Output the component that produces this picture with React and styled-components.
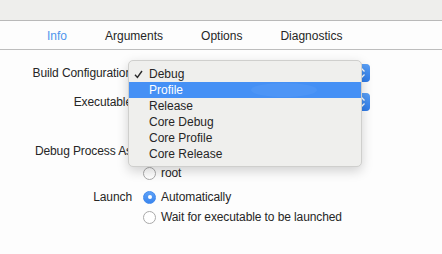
import styled, { createGlobalStyle } from "styled-components";

const GlobalStyle = createGlobalStyle`
  html, body {
    margin: 0;
    padding: 0;
    background: #fdfdfd;
    font-family: "Liberation Sans", Arial, sans-serif;
    font-size: 12px;
    color: #262626;
  }
`;

const Window = styled.div`
  position: relative;
  width: 442px;
  height: 254px;
  overflow: hidden;
  background: #fdfdfd;
`;

const TopBar = styled.div`
  height: 20px;
  background: #eeeeec;
  border-bottom: 1px solid #b9b9b9;
`;

const TabBar = styled.div`
  height: 28px;
  display: flex;
  align-items: center;
  gap: 38px;
  padding-left: 47px;
  border-bottom: 1px solid #bdbdbd;
  background: #fdfdfd;
`;

const Tab = styled.div`
  font-size: 12px;
  color: ${(p) => (p.$active ? "#4f95ec" : "#262626")};
  padding-top: 1px;
`;

const Form = styled.div`
  display: flex;
  flex-direction: column;
  padding-top: 14px;
`;

const Row = styled.div`
  display: grid;
  grid-template-columns: 132px 1fr;
  column-gap: 11px;
  align-items: start;
  margin-top: ${(p) => p.$top || 0}px;
`;

const Label = styled.div`
  text-align: right;
  line-height: 18px;
  white-space: nowrap;
  letter-spacing: -0.1px;
`;

const Popup = styled.div`
  position: relative;
  width: 227px;
  height: 18px;
  box-sizing: border-box;
  border: 1px solid #c4c4c4;
  border-radius: 4px;
  background: #ffffff;
`;

const PopupCap = styled.div`
  position: absolute;
  right: -1px;
  top: -1px;
  width: 16px;
  height: 18px;
  border-radius: 0 4px 4px 0;
  background: linear-gradient(#5aa0f7, #2f7be8);
  display: flex;
  align-items: center;
  justify-content: center;
`;

const Radios = styled.div`
  display: flex;
  flex-direction: column;
`;

const RadioItem = styled.div`
  display: flex;
  align-items: center;
  gap: 5px;
  height: ${(p) => p.$h || 20}px;
  letter-spacing: -0.1px;
`;

const RadioDot = styled.span`
  width: 13px;
  height: 13px;
  box-sizing: border-box;
  border-radius: 50%;
  border: 1px solid ${(p) => (p.$on ? "#3f89ee" : "#a9a9a9")};
  background: ${(p) => (p.$on ? "linear-gradient(#5ea2f8, #3a85ee)" : "#ffffff")};
  display: flex;
  align-items: center;
  justify-content: center;
  &::after {
    content: "";
    display: ${(p) => (p.$on ? "block" : "none")};
    width: 4px;
    height: 4px;
    border-radius: 50%;
    background: #ffffff;
  }
`;

const Menu = styled.div`
  position: absolute;
  left: 128px;
  top: 60px;
  width: 234px;
  box-sizing: border-box;
  padding: 5px 0 4px;
  background: #efefed;
  border: 1px solid #cfcfcd;
  border-radius: 5px;
  box-shadow: 0 4px 12px rgba(0, 0, 0, 0.18);
`;

const MenuItem = styled.div`
  position: relative;
  height: 16px;
  line-height: 16px;
  padding-left: 20px;
  font-size: 12px;
  color: ${(p) => (p.$hl ? "#ffffff" : "#262626")};
  background: ${(p) => (p.$hl ? "#4590f5" : "transparent")};
`;

const ItemText = styled.span`
  position: relative;
`;

const Check = styled.svg`
  position: absolute;
  left: 5px;
  top: 4px;
`;

const Glare = styled.div`
  position: absolute;
  left: 122px;
  top: 1px;
  width: 66px;
  height: 14px;
  border-radius: 50%;
  background: #4d95f6;
`;

const Arrows = () => (
  <svg width="8" height="12" viewBox="0 0 8 12">
    <path d="M1.5 4.5 L4 2 L6.5 4.5 M1.5 7.5 L4 10 L6.5 7.5" fill="none" stroke="#fff" strokeWidth="1.3" />
  </svg>
);

const tabs = ["Info", "Arguments", "Options", "Diagnostics"];
const configs = ["Debug", "Profile", "Release", "Core Debug", "Core Profile", "Core Release"];

export default function App() {
  return (
    <Window>
      <GlobalStyle />
      <TopBar />
      <TabBar>
        {tabs.map((t, i) => (
          <Tab key={t} $active={i === 0}>
            {t}
          </Tab>
        ))}
      </TabBar>
      <Form>
        <Row>
          <Label>Build Configuration</Label>
          <Popup>
            <PopupCap>
              <Arrows />
            </PopupCap>
          </Popup>
        </Row>
        <Row $top={11}>
          <Label>Executable</Label>
          <Popup>
            <PopupCap>
              <Arrows />
            </PopupCap>
          </Popup>
        </Row>
        <Row $top={31}>
          <Label>Debug Process As</Label>
          <Radios>
            <RadioItem $h={18}>
              <RadioDot />
            </RadioItem>
            <RadioItem $h={26}>
              <RadioDot />
              root
            </RadioItem>
          </Radios>
        </Row>
        <Row $top={2}>
          <Label>Launch</Label>
          <Radios>
            <RadioItem $h={18}>
              <RadioDot $on />
              Automatically
            </RadioItem>
            <RadioItem $h={22}>
              <RadioDot />
              Wait for executable to be launched
            </RadioItem>
          </Radios>
        </Row>
      </Form>
      <Menu>
        {configs.map((c, i) => (
          <MenuItem key={c} $hl={i === 1}>
            {i === 1 && <Glare />}
            {i === 0 && (
              <Check width="9" height="9" viewBox="0 0 9 9">
                <path d="M1 4.8 L3.4 7.5 L8 1" fill="none" stroke="#2a2a2a" strokeWidth="1.4" />
              </Check>
            )}
            <ItemText>{c}</ItemText>
          </MenuItem>
        ))}
      </Menu>
    </Window>
  );
}
